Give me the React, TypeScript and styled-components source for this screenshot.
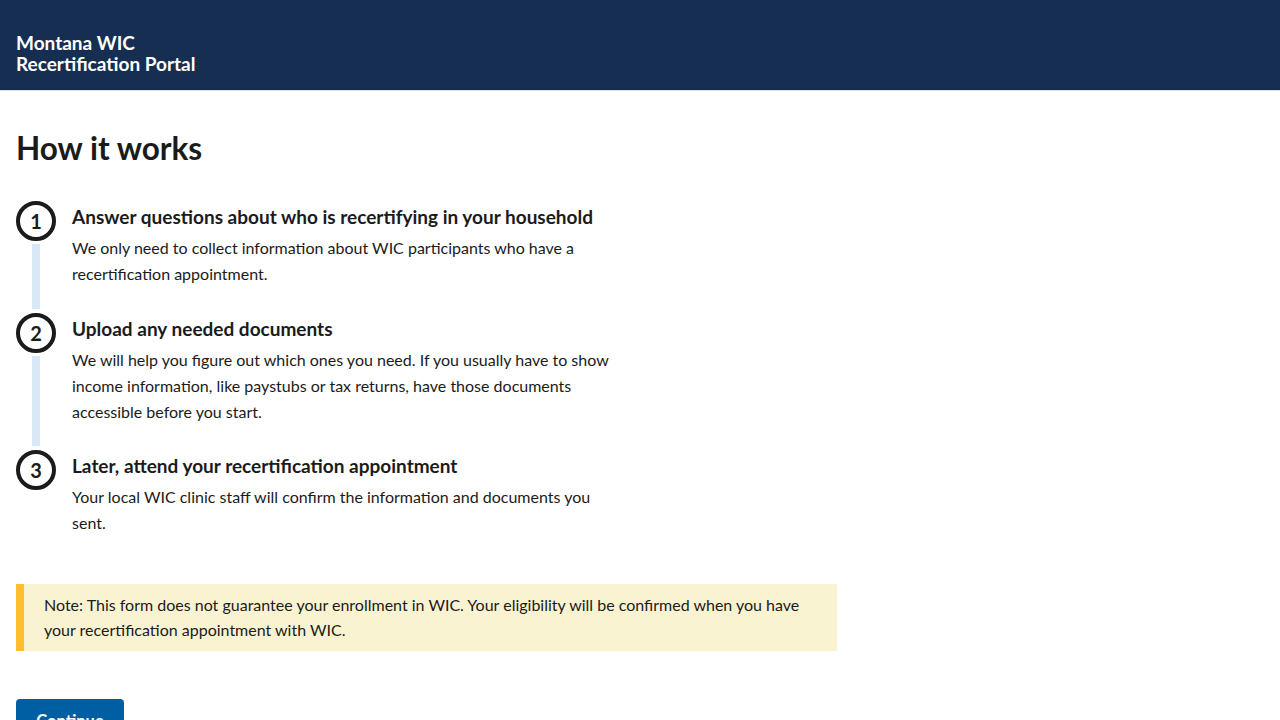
import styled, { createGlobalStyle } from "styled-components";

const GlobalStyle = createGlobalStyle`
  html, body {
    margin: 0;
    padding: 0;
    background: #ffffff;
    color: #1b1b1b;
    font-family: Lato, "Source Sans Pro", "Helvetica Neue", Arial, sans-serif;
  }
  * { box-sizing: border-box; }
`;

const Header = styled.header`
  height: 91px;
  background: #162e51;
  border-bottom: 1px solid #dfe1e2;
  display: flex;
  align-items: flex-end;
  padding: 0 16px 16px;
`;

const Title = styled.div`
  color: #ffffff;
  font-size: 19px;
  font-weight: 700;
  line-height: 21px;
`;

const Main = styled.main`
  padding: 0 16px;
`;

const PageHeading = styled.h1`
  margin: 38px 0 34px;
  font-size: 31.5px;
  font-weight: 700;
  line-height: 38px;
`;

const ProcessList = styled.ol`
  list-style: none;
  margin: 0 0 48px;
  padding: 0;
`;

const Step = styled.li<{ $last?: boolean }>`
  display: grid;
  grid-template-columns: 40px 1fr;
  column-gap: 16px;
  padding-bottom: ${(p) => (p.$last ? "0" : "25.5px")};
`;

const Marker = styled.div`
  display: flex;
  flex-direction: column;
  align-items: center;
`;

const Circle = styled.span`
  width: 40px;
  height: 40px;
  border: 4px solid #1b1b1b;
  border-radius: 50%;
  display: flex;
  align-items: center;
  justify-content: center;
  font-size: 20px;
  font-weight: 700;
  line-height: 1;
`;

const Connector = styled.span`
  flex: 1;
  width: 8px;
  margin: 3px 0 -21.5px;
  background: #d9e8f6;
`;

const StepBody = styled.div`
  padding-top: 5px;
`;

const StepHeading = styled.h4`
  margin: 0;
  font-size: 19px;
  font-weight: 700;
  line-height: 22px;
`;

const StepText = styled.p`
  margin: 7px 0 0;
  max-width: 548px;
  font-size: 16px;
  line-height: 26px;
`;

const Alert = styled.div`
  width: 821px;
  background: #faf3d1;
  border-left: 8px solid #ffbe2e;
  padding: 8px 16px 9px 20px;
  font-size: 16px;
  line-height: 25px;
  margin-bottom: 48px;
`;

const Button = styled.button`
  background: #005ea2;
  color: #ffffff;
  border: 0;
  border-radius: 4px;
  padding: 13px 20px;
  min-width: 108px;
  font-family: inherit;
  font-size: 16.5px;
  font-weight: 700;
  line-height: 18px;
  cursor: pointer;
`;

const steps = [
  {
    title: "Answer questions about who is recertifying in your household",
    text: "We only need to collect information about WIC participants who have a recertification appointment.",
  },
  {
    title: "Upload any needed documents",
    text: "We will help you figure out which ones you need. If you usually have to show income information, like paystubs or tax returns, have those documents accessible before you start.",
  },
  {
    title: "Later, attend your recertification appointment",
    text: "Your local WIC clinic staff will confirm the information and documents you sent.",
  },
];

export default function App() {
  return (
    <>
      <GlobalStyle />
      <Header>
        <Title>
          Montana WIC
          <br />
          Recertification Portal
        </Title>
      </Header>
      <Main>
        <PageHeading>How it works</PageHeading>
        <ProcessList>
          {steps.map((s, i) => {
            const last = i === steps.length - 1;
            return (
              <Step key={s.title} $last={last}>
                <Marker>
                  <Circle>{i + 1}</Circle>
                  {!last && <Connector />}
                </Marker>
                <StepBody>
                  <StepHeading>{s.title}</StepHeading>
                  <StepText>{s.text}</StepText>
                </StepBody>
              </Step>
            );
          })}
        </ProcessList>
        <Alert>
          Note: This form does not guarantee your enrollment in WIC. Your eligibility will be confirmed when you have
          your recertification appointment with WIC.
        </Alert>
        <Button type="button">Continue</Button>
      </Main>
    </>
  );
}
